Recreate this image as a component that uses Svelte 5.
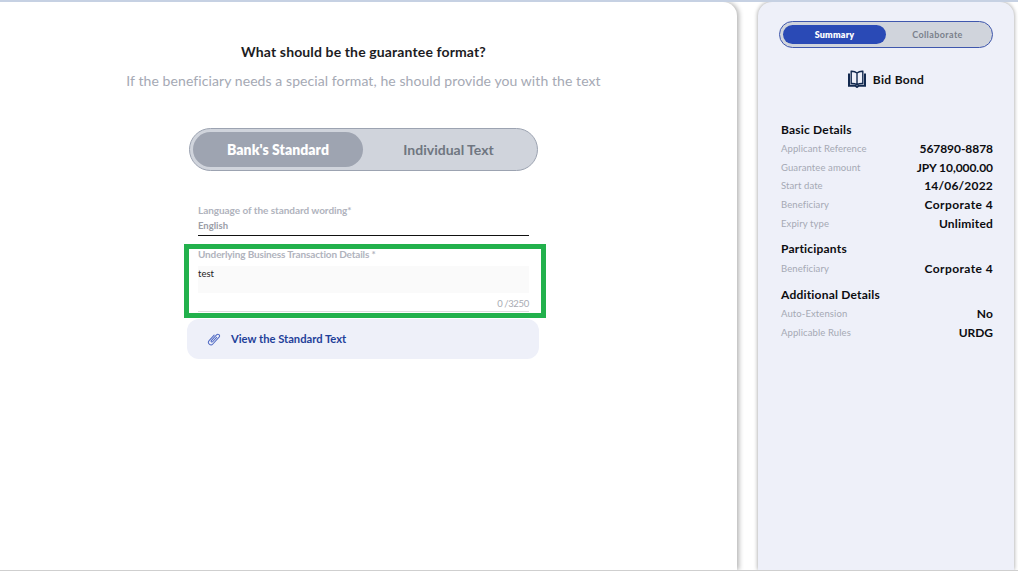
<script>
  const basic = [
    ['Applicant Reference', '567890-8878', 'tight'],
    ['Guarantee amount', 'JPY 10,000.00', 'tight'],
    ['Start date', '14/06/2022', ''],
    ['Beneficiary', 'Corporate 4', 'wide'],
    ['Expiry type', 'Unlimited', '']
  ];
  const participants = [['Beneficiary', 'Corporate 4', 'wide']];
  const additional = [
    ['Auto-Extension', 'No', ''],
    ['Applicable Rules', 'URDG', 'tight']
  ];
</script>

<div class="page">
  <main class="main">
    <h1>What should be the guarantee format?</h1>
    <p class="sub">If the beneficiary needs a special format, he should provide you with the text</p>

    <div class="toggle">
      <div class="opt active">Bank's Standard</div>
      <div class="opt">Individual Text</div>
    </div>

    <div class="field lang">
      <div class="label">Language of the standard wording*</div>
      <div class="value">English</div>
    </div>

    <div class="highlight">
      <div class="label up">Underlying Business Transaction Details *</div>
      <div class="textarea">test</div>
      <div class="count">0 /3250</div>
    </div>

    <div class="attach">
      <svg width="14" height="14" viewBox="0 0 14 14" fill="none" stroke="#4f69c4" stroke-width="1" stroke-linecap="round" stroke-linejoin="round">
        <g transform="rotate(42 7 7)">
          <path d="M4.500 4V11.500a2.500 2.500 0 0 0 5 0V2.200a1.700 1.700 0 0 0-3.400 0V10a.85.85 0 0 0 1.700 0V4" />
        </g>
      </svg>
      <span>View the Standard Text</span>
    </div>
  </main>

  <aside class="side">
    <div class="tabs">
      <div class="tab on">Summary</div>
      <div class="tab">Collaborate</div>
    </div>

    <div class="title">
      <svg width="18" height="18" viewBox="0 0 18 18" fill="none" stroke="#12294f" stroke-linejoin="miter">
        <path stroke-width="1.4" d="M9 3C7.600 1.800 5.500 1.200 3.200 1.300v12.200c2.300-.1 4.400.3 5.800 1.300 1.400-1 3.500-1.400 5.800-1.300V1.300C12.500 1.200 10.400 1.800 9 3ZM9 3v11.800" />
        <path stroke-width="2" d="M1 3.500v12.200h6.300L9 17l1.700-1.300H17V3.500" />
      </svg>
      <span>Bid Bond</span>
    </div>

    <h2 class="first">Basic Details</h2>
    {#each basic as [k, v, c]}
      <div class="row"><span class="k">{k}</span><span class="v {c}">{v}</span></div>
    {/each}

    <h2>Participants</h2>
    {#each participants as [k, v, c]}
      <div class="row"><span class="k">{k}</span><span class="v {c}">{v}</span></div>
    {/each}

    <h2 class="last">Additional Details</h2>
    {#each additional as [k, v, c]}
      <div class="row"><span class="k">{k}</span><span class="v {c}">{v}</span></div>
    {/each}
  </aside>
</div>

<style>
  :global(body) {
    margin: 0;
    background: #fff;
    font-family: "Lato", "Open Sans", sans-serif;
  }
  .page {
    box-sizing: border-box;
    width: 1018px;
    height: 571px;
    overflow: hidden;
    display: flex;
    gap: 21px;
    border-top: 2px solid #c6d1e3;
    border-bottom: 1px solid #cfcfcf;
  }
  .main {
    box-sizing: border-box;
    width: 737px;
    height: 100%;
    background: #fff;
    border-top-right-radius: 14px;
    box-shadow: 2px 0 5px rgba(0, 0, 0, 0.3);
    display: flex;
    flex-direction: column;
    align-items: center;
    padding-top: 41px;
    padding-right: 10px;
  }
  h1 {
    margin: 0;
    font-size: 14px;
    line-height: 17px;
    font-weight: 700;
    color: #1d1d1f;
    letter-spacing: 0.13px;
  }
  .sub {
    margin: 12px 0 0;
    font-size: 14px;
    line-height: 18px;
    color: #a5a9b4;
    letter-spacing: 0.08px;
  }
  .toggle {
    box-sizing: border-box;
    margin-top: 38px;
    width: 349px;
    height: 43px;
    border: 1px solid #9ca3b1;
    border-radius: 22px;
    background: #d0d4dc;
    padding: 3px;
    display: flex;
  }
  .opt {
    flex: 1;
    display: flex;
    align-items: center;
    justify-content: center;
    border-radius: 18px;
    font-size: 14px;
    font-weight: 700;
    color: #6f7681;
  }
  .opt.active {
    flex: 0 0 170px;
    background: #9ea4b1;
    color: #fff;
    font-weight: 800;
    letter-spacing: 0.05px;
  }
  .field, .highlight {
    box-sizing: border-box;
  }
  .lang {
    margin-top: 33px;
    width: 331px;
    height: 32px;
    border-bottom: 1px solid #111;
    margin-bottom: 8px;
  }
  .label {
    font-size: 10px;
    line-height: 12px;
    font-weight: 700;
    color: #b0b3bd;
    letter-spacing: -0.05px;
  }
  .label.up {
    margin-top: -1px;
    letter-spacing: -0.15px;
  }
  .value {
    margin-top: 4px;
    font-size: 9.5px;
    line-height: 12px;
    font-weight: 700;
    color: #9b9ea8;
  }
  .highlight {
    width: 362px;
    height: 74px;
    margin-left: 3px;
    border: 5px solid #22b14c;
    padding: 0 12px 0 9px;
    display: flex;
    flex-direction: column;
  }
  .textarea {
    margin-top: 6px;
    height: 27px;
    padding-top: 1px;
    box-sizing: border-box;
    background: #fafafa;
    font-size: 9.5px;
    line-height: 14px;
    color: #222;
  }
  .count {
    margin-top: 4px;
    padding-top: 1px;
    font-size: 9.5px;
    line-height: 12px;
    color: #a8abb3;
    text-align: right;
    word-spacing: -0.5px;
    letter-spacing: -0.3px;
    border-bottom: 1px solid #ddd;
    height: 13px;
  }
  .attach {
    box-sizing: border-box;
    margin-top: 1px;
    margin-right: 1px;
    width: 352px;
    height: 40px;
    border-radius: 12px;
    background: #eef0f9;
    display: flex;
    align-items: center;
    gap: 10px;
    padding-left: 20px;
    padding-bottom: 1px;
    font-size: 11.2px;
    font-weight: 700;
    color: #1f4099;
  }
  .side {
    box-sizing: border-box;
    width: 256px;
    height: 100%;
    background: #eef0f9;
    border-radius: 14px 14px 0 0;
    box-shadow: 0 0 4px rgba(0, 0, 0, 0.4);
    padding: 19px 21px 0 21px;
  }
  .tabs {
    box-sizing: border-box;
    width: 214px;
    height: 27px;
    border: 1px solid #3f57ad;
    border-radius: 14px;
    background: #d0d4dc;
    padding: 3px;
    display: flex;
  }
  .tab {
    flex: 1;
    display: flex;
    align-items: center;
    justify-content: center;
    border-radius: 10px;
    font-size: 9px;
    font-weight: 700;
    color: #7a808b;
    letter-spacing: 0.4px;
  }
  .tab.on {
    flex: 0 0 103px;
    background: #2a4ab6;
    color: #fff;
    font-weight: 800;
    letter-spacing: 0.2px;
  }
  .title {
    margin-top: 21px;
    height: 20px;
    display: flex;
    align-items: center;
    justify-content: center;
    gap: 7px;
    font-size: 12px;
    font-weight: 700;
    color: #111;
    letter-spacing: 0.3px;
  }
  h2 {
    margin: 8px 0 3px;
    padding-left: 2px;
    font-size: 12px;
    line-height: 15px;
    font-weight: 700;
    color: #0c0c10;
    letter-spacing: 0.2px;
  }
  h2.first {
    margin-top: 33px;
    margin-bottom: 2px;
  }
  h2.last {
    margin-top: 9px;
  }
  .row {
    display: flex;
    justify-content: space-between;
    align-items: center;
    height: 18.75px;
    padding-left: 2px;
  }
  .k {
    font-size: 9.5px;
    color: #a5a9b4;
    letter-spacing: 0.1px;
  }
  .v {
    font-size: 12px;
    font-weight: 700;
    color: #0c0c10;
    letter-spacing: 0.2px;
  }
  .v.tight {
    letter-spacing: -0.05px;
  }
  .v.wide {
    letter-spacing: 0.4px;
  }
</style>
